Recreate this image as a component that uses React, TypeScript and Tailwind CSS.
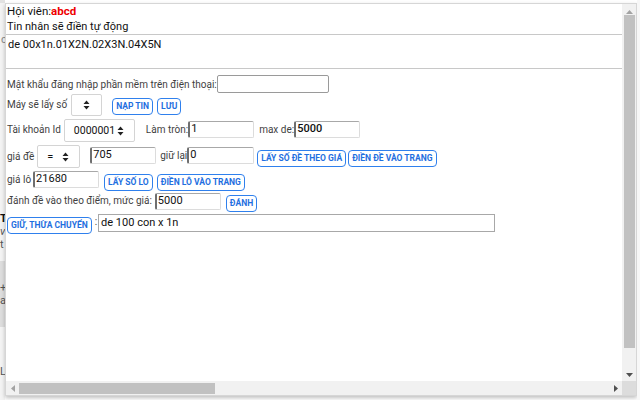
import React from "react"

const font = { fontFamily: "Roboto, 'Liberation Sans', sans-serif" }

function Btn({ label, className = "" }: { label: string; className?: string }) {
  return (
    <button
      className={
        "h-[17px] shrink-0 rounded-[4px] border border-[#2f80ed] bg-white px-[3px] text-[8.5px] font-bold leading-none text-[#1f6fe0] " +
        className
      }
    >
      {label}
    </button>
  )
}

function Arrows() {
  return (
    <svg width="7" height="10" viewBox="0 0 7 10">
      <path d="M3.5 0.5 L6.5 4 H0.5 Z M3.5 9.5 L6.5 6 H0.5 Z" fill="#222" />
    </svg>
  )
}

function Select({ value, className = "" }: { value?: string; className?: string }) {
  return (
    <div
      className={
        "flex shrink-0 items-center rounded-[2px] border border-[#d4d4d4] bg-white text-[#111] " +
        className
      }
    >
      {value && <span className="flex-1 pl-[9px] pt-[1px]">{value}</span>}
      <Arrows />
    </div>
  )
}

function Field({ value = "", className = "" }: { value?: string; className?: string }) {
  return (
    <div
      className={
        "h-[17px] shrink-0 rounded-[2px] border border-l-2 border-t-[#a8a8a8] border-l-[#6f6f6f] border-r-[#dcdcdc] border-b-[#dcdcdc] bg-white pl-[1px] text-[11px] leading-[14px] text-[#111] " +
        className
      }
    >
      {value}
    </div>
  )
}

export default function App() {
  return (
    <div className="flex h-[400px] w-[640px] overflow-hidden bg-white" style={font}>
      {/* page behind the popup */}
      <div className="flex w-[5px] shrink-0 flex-col overflow-hidden bg-[#f4f4f4] text-[11px] leading-[13px] text-[#555]">
        <div className="h-[3px] bg-[#e2e2e2]" />
        <div className="mt-[30px] h-[14px] pl-[1px] text-[#888]">c</div>
        <div className="mt-[165px] font-bold text-[#111]">T</div>
        <div className="italic">vs</div>
        <div>t</div>
        <div className="mt-[10px] flex h-[66px] flex-col justify-center bg-[#dedede]">
          <div>+</div>
          <div>ac</div>
        </div>
        <div className="mt-[38px]">L</div>
      </div>

      {/* popup */}
      <div className="mt-[3px] flex h-[393px] w-[632px] shrink-0 flex-col border border-[#d6d6d6] bg-white shadow-[0_2px_4px_rgba(0,0,0,0.25)]">
        <div className="flex min-h-0 flex-1">
          <div className="min-w-0 flex-1 overflow-hidden text-[10px] leading-[14px] text-[#3f3f3f]">
            <div className="pl-[1px] text-[11.5px] leading-[15px] text-[#111]">
              Hội viên:<span className="font-bold text-[#e00]">abcd</span>
            </div>
            <div className="pl-[1px] text-[11px] leading-[15px] text-[#111]">Tin nhân sẽ điền tự động</div>
            <div className="h-[35px] border-y border-[#c8c8c8] pl-[2px] pt-[3px] text-[11px] text-[#111]">
              de 00x1n.01X2N.02X3N.04X5N
            </div>

            <div className="mt-[5px] flex h-[20px] items-start pl-[1px]">
              <span className="mt-[4px]">Mật khẩu đăng nhập phần mềm trên điện thoại:</span>
              <div className="mt-[1px] h-[18px] w-[112px] rounded-[2px] border border-[#9a9a9a]" />
            </div>

            <div className="flex h-[23px] items-start pl-[1px]">
              <span className="mt-[4px]">Máy sẽ lấy số</span>
              <Select className="ml-[4px] h-[22px] w-[31px] justify-center" />
              <Btn label="NẠP TIN" className="ml-[10px] mt-[4px] h-[16px]" />
              <Btn label="LƯU" className="ml-[4px] mt-[4px] h-[16px]" />
            </div>

            <div className="mt-[1px] flex h-[26px] items-start pl-[1px]">
              <span className="mt-[5px]">Tài khoản Id</span>
              <Select value="0000001" className="ml-[3px] mt-[1px] h-[23px] w-[71px] pr-[10px] text-[10.5px]" />
              <span className="ml-[11px] mt-[5px]">Làm tròn:</span>
              <Field value="1" className="mt-[3px] w-[66px]" />
              <span className="ml-[5px] mt-[5px]">max de:</span>
              <Field value="5000" className="mt-[3px] w-[66px] font-medium" />
            </div>

            <div className="flex h-[26px] items-start pl-[1px]">
              <span className="mt-[6px]">giá đề</span>
              <Select value="=" className="ml-[3px] mt-[1px] h-[23px] w-[43px] pr-[10px] text-[11px]" />
              <Field value="705" className="ml-[10px] mt-[3px] w-[66px]" />
              <span className="ml-[4px] mt-[5px]">giữ lại</span>
              <Field value="0" className="mt-[3px] w-[67px]" />
              <Btn label="LẤY SỐ ĐỀ THEO GIÁ" className="ml-[3px] mt-[6px]" />
              <Btn label="ĐIỀN ĐỀ VÀO TRANG" className="ml-[2px] mt-[6px]" />
            </div>

            <div className="flex h-[22px] items-start pl-[1px]">
              <span className="mt-[3px]">giá lô</span>
              <Field value="21680" className="ml-[2px] mt-[1px] w-[66px]" />
              <Btn label="LẤY SỐ LO" className="ml-[5px] mt-[4px]" />
              <Btn label="ĐIỀN LÔ VÀO TRANG" className="ml-[4px] mt-[4px]" />
            </div>

            <div className="flex h-[21px] items-start pl-[1px]">
              <span className="mt-[2px]">đánh đề vào theo điểm, mức giá:</span>
              <Field value="5000" className="ml-[3px] mt-[1px] w-[66px]" />
              <Btn label="ĐÁNH" className="ml-[5px] mt-[3px]" />
            </div>

            <div className="flex h-[21px] items-start pl-[1px]">
              <Btn label="GIỮ, THỪA CHUYỂN" className="mt-[4px] px-[2px]" />
              <span className="ml-[3px] mt-[2px]">:</span>
              <div className="ml-[1px] mt-[1px] h-[18px] w-[397px] border border-[#a8a8a8] pl-[2px] text-[11px] leading-[15px] text-[#111]">
                de 100 con x 1n
              </div>
            </div>
          </div>

          {/* vertical scrollbar */}
          <div className="flex w-[14px] shrink-0 flex-col items-center bg-[#f1f1f1]">
            <div className="flex h-[10px] items-end justify-center">
              <svg width="7" height="4" viewBox="0 0 7 4">
                <path d="M3.5 0 L7 4 H0 Z" fill="#a3a3a3" />
              </svg>
            </div>
            <div className="mt-[1px] h-[333px] w-[11px] bg-[#c1c1c1]" />
            <div className="flex flex-1 items-center justify-center pt-[20px]">
              <svg width="7" height="4" viewBox="0 0 7 4">
                <path d="M0 0 H7 L3.5 4 Z" fill="#505050" />
              </svg>
            </div>
          </div>
        </div>

        {/* horizontal scrollbar */}
        <div className="flex h-[14px] shrink-0">
          <div className="flex flex-1 items-center bg-[#f1f1f1]">
            <div className="flex w-[13px] justify-center">
              <svg width="4" height="7" viewBox="0 0 4 7">
                <path d="M0 3.5 L4 0 V7 Z" fill="#a3a3a3" />
              </svg>
            </div>
            <div className="h-[11px] w-[196px] bg-[#c1c1c1]" />
            <div className="flex-1" />
            <div className="flex w-[13px] justify-center">
              <svg width="4" height="7" viewBox="0 0 4 7">
                <path d="M4 3.5 L0 0 V7 Z" fill="#505050" />
              </svg>
            </div>
          </div>
          <div className="w-[14px] bg-[#dcdcdc]" />
        </div>
      </div>
      <div className="flex-1 bg-[#f7f7f7]" />
    </div>
  )
}
